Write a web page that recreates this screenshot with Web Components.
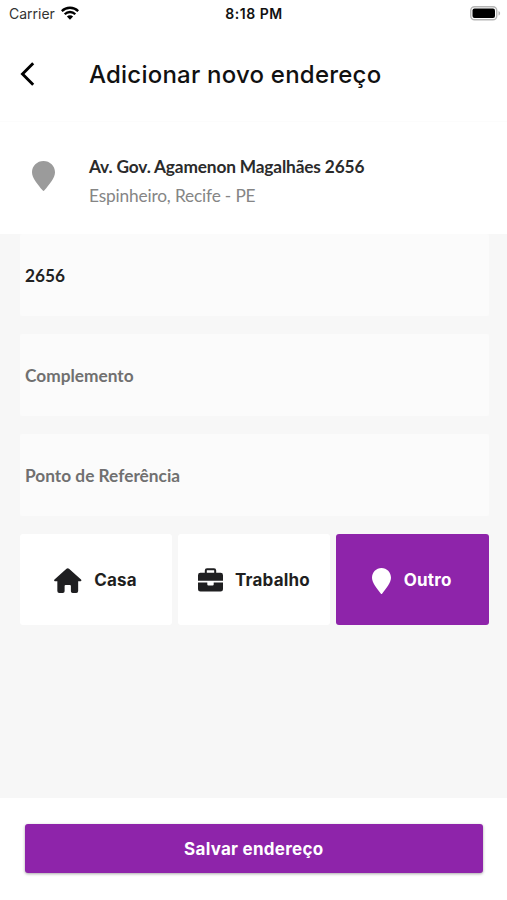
<!DOCTYPE html>
<html lang="pt-BR">
<head>
<meta charset="utf-8">
<meta name="viewport" content="width=device-width, initial-scale=1">
<title>Adicionar novo endereço</title>
<style>
    body {
        margin: 0;
        background: #fff;
        font-family: Inter, "Liberation Sans", sans-serif;
        color: #1f1f21;
    }
</style>
</head>
<body>
<address-page></address-page>

<script>
// shared base: every element only provides its markup
class BaseElement extends HTMLElement {
    constructor() {
        super();
        this.attachShadow({ mode: 'open' });
        const template = document.createElement('template');
        template.innerHTML = this.markup();
        this.shadowRoot.appendChild(template.content.cloneNode(true));
    }
}

const icons = {
    back: ['0 0 16 26', '<path d="M13.2 2.2 2.5 13l10.7 10.8" fill="none" stroke="currentColor" stroke-width="2.9"/>'],
    pin: ['0 0 20 26', '<path d="M10 0C4.4 0 0 4.3 0 9.7 0 14.6 5 20.3 9.2 25.4Q10 26.4 10.8 25.4C15 20.3 20 14.6 20 9.7 20 4.3 15.6 0 10 0Z" fill="currentColor"/>'],
    home: ['0 0 28 26', '<path d="M12.7.7.5 11.6C-.2 12.4.1 13.3 1 13.3H3.4V23q0 2 2 2H9q1.800 0 1.800-1.800V18q0-1 1-1h4.400q1 0 1 1v5.200Q17.200 25 19 25h3.600q2 0 2-2V13.300H27c.9 0 1.200-.9.500-1.700L15.300.7Q14-.4 12.700.7Z" fill="currentColor"/>'],
    work: ['0 0 25 24', '<path d="M7.8 5.5V2.4Q7.8 1.200 9 1.200h7Q17.200 1.200 17.200 2.400v3.100" fill="none" stroke="currentColor" stroke-width="2"/><path d="M2.400 4.800h20.200Q25 4.800 25 7.200v5.600H0V7.200Q0 4.800 2.400 4.800ZM0 14.600h9.300v1.900q0 1.100 1.100 1.100h4.200q1.100 0 1.100-1.100v-1.900H25v6.600q0 2.300-2.400 2.300H2.400Q0 23.500 0 21.200Z" fill="currentColor"/>'],
    wifi: ['0 0 18 14', '<g fill="none" stroke="currentColor" stroke-width="2.3"><path d="M.8 5.1a11.7 11.7 0 0 1 16.4 0"/><path d="M3.7 8.2a7.5 7.5 0 0 1 10.6 0"/></g><path d="M9 13.7 5.9 10.5a4.4 4.4 0 0 1 6.2 0Z" fill="currentColor"/>'],
    battery: ['0 0 31 15', '<rect x=".75" y=".75" width="26" height="13" rx="3.8" fill="#fff" stroke="#b5b5b5" stroke-width="1.4"/><rect x="2.5" y="2.5" width="22.5" height="9.5" rx="2" fill="#000"/><path d="M28.5 5v4.600c2.200-.9 2.200-3.700 0-4.600Z" fill="#b5b5b5"/>']
};

class AppIcon extends BaseElement {
    markup() {
        return `
            <style>
                :host { display: block; flex: none; }
                svg { display: block; width: 100%; height: 100%; }
            </style>
        `;
    }

    connectedCallback() {
        const [box, shape] = icons[this.getAttribute('name')];
        this.shadowRoot.innerHTML += `<svg viewBox="${box}" preserveAspectRatio="none">${shape}</svg>`;
    }
}

class StatusBar extends BaseElement {
    markup() {
        return `
            <style>
                :host {
                    display: grid;
                    grid-template-columns: 1fr auto 1fr;
                    align-items: center;
                    height: 28px;
                    padding: 0 6px 0 9px;
                    box-sizing: border-box;
                    color: #111;
                    font-size: 14px;
                }
                .carrier { display: flex; align-items: center; gap: 6px; margin-top: -1px; color: #333; }
                .carrier app-icon { width: 18px; height: 14px; margin-top: -1px; color: #000; }
                .time { font-size: 14px; font-weight: 600; letter-spacing: .5px; margin: -1px 2px 0 0; }
                .battery { width: 31px; height: 15px; justify-self: end; margin-top: -1px; }
            </style>
            <div class="carrier"><span>Carrier</span><app-icon name="wifi"></app-icon></div>
            <span class="time">8:18 PM</span>
            <app-icon class="battery" name="battery"></app-icon>
        `;
    }
}

class PageHeader extends BaseElement {
    markup() {
        return `
            <style>
                :host {
                    display: flex;
                    align-items: center;
                    height: 94px;
                    padding: 0 20px;
                    border-bottom: 1px solid #fcfcfc;
                    box-sizing: border-box;
                }
                app-icon { width: 16px; height: 26px; margin: -1px 53px 0 0; color: #000; }
                h1 {
                    margin: 0;
                    font-size: 24px;
                    font-weight: 450;
                    line-height: 30px;
                    letter-spacing: .22px;
                    color: #111;
                    white-space: nowrap;
                }
            </style>
            <app-icon name="back"></app-icon>
            <h1><slot></slot></h1>
        `;
    }
}

class AddressSummary extends BaseElement {
    markup() {
        return `
            <style>
                :host {
                    display: flex;
                    align-items: center;
                    height: 112px;
                    padding: 6px 32px 0;
                    box-sizing: border-box;
                    font-family: Lato, sans-serif;
                    font-size: 17.3px;
                    line-height: 29px;
                    letter-spacing: -.16px;
                }
                app-icon { width: 23px; height: 30px; margin: -10px 34px 0 0; color: #9b9b9b; }
                .street { font-weight: 700; color: #2b2b2b; }
                .area { color: #858585; }
            </style>
            <app-icon name="pin"></app-icon>
            <div>
                <div class="street"><slot name="street"></slot></div>
                <div class="area"><slot name="area"></slot></div>
            </div>
        `;
    }
}

class TextField extends BaseElement {
    markup() {
        return `
            <style>
                :host {
                    display: flex;
                    align-items: center;
                    height: 82px;
                    padding: 2px 5px 0;
                    box-sizing: border-box;
                    border-radius: 2px;
                    background: #fbfbfb;
                    font: 700 17.3px/24px Lato, sans-serif;
                    color: #707070;
                }
                :host([filled]) { color: #222; }
            </style>
            <slot></slot>
        `;
    }
}

class KindOption extends BaseElement {
    markup() {
        return `
            <style>
                :host {
                    display: flex;
                    align-items: center;
                    justify-content: center;
                    gap: 12.5px;
                    height: 91px;
                    padding-right: 1px;
                    box-sizing: border-box;
                    border-radius: 3px;
                    background: #fff;
                    font-size: 17px;
                    font-weight: 650;
                    letter-spacing: .2px;
                    color: #1f1f21;
                }
                :host([selected]) { background: #8e24aa; color: #fff; }
            </style>
            <slot name="icon"></slot>
            <span><slot></slot></span>
        `;
    }
}

class SaveButton extends BaseElement {
    markup() {
        return `
            <style>
                :host { display: block; }
                button {
                    display: block;
                    width: 100%;
                    height: 49px;
                    padding: 0;
                    border: 0;
                    border-radius: 3px;
                    background: #8e24aa;
                    box-shadow: 0 1px 3px rgba(0, 0, 0, .35);
                    font: 650 17px/24px Inter, sans-serif;
                    letter-spacing: .27px;
                    color: #fff;
                }
            </style>
            <button type="button"><slot></slot></button>
        `;
    }
}

class AddressPage extends BaseElement {
    markup() {
        return `
            <style>
                :host { display: flex; flex-direction: column; height: 900px; }
                main {
                    flex: 1;
                    display: flex;
                    flex-direction: column;
                    gap: 18px;
                    padding: 0 18.5px 0 20px;
                    background: #f7f7f7;
                }
                .kinds { display: grid; grid-template-columns: repeat(3, 1fr); gap: 6px; }
                .home { width: 27.5px; height: 26px; margin-top: 2px; }
                .work { width: 25px; height: 24px; margin-top: 1px; }
                .other { width: 19px; height: 26px; margin-top: 2px; }
                footer { height: 102.5px; padding: 26.5px 24.5px 0 25px; box-sizing: border-box; }
            </style>
            <status-bar></status-bar>
            <page-header>Adicionar novo endereço</page-header>
            <address-summary>
                <span slot="street">Av. Gov. Agamenon Magalhães 2656</span>
                <span slot="area">Espinheiro, Recife - PE</span>
            </address-summary>
            <main>
                <text-field filled>2656</text-field>
                <text-field>Complemento</text-field>
                <text-field>Ponto de Referência</text-field>
                <div class="kinds">
                    <kind-option><app-icon class="home" slot="icon" name="home"></app-icon>Casa</kind-option>
                    <kind-option><app-icon class="work" slot="icon" name="work"></app-icon>Trabalho</kind-option>
                    <kind-option selected><app-icon class="other" slot="icon" name="pin"></app-icon>Outro</kind-option>
                </div>
            </main>
            <footer><save-button>Salvar endereço</save-button></footer>
        `;
    }
}

window.customElements.define('app-icon', AppIcon);
window.customElements.define('status-bar', StatusBar);
window.customElements.define('page-header', PageHeader);
window.customElements.define('address-summary', AddressSummary);
window.customElements.define('text-field', TextField);
window.customElements.define('kind-option', KindOption);
window.customElements.define('save-button', SaveButton);
window.customElements.define('address-page', AddressPage);
</script>
</body>
</html>
